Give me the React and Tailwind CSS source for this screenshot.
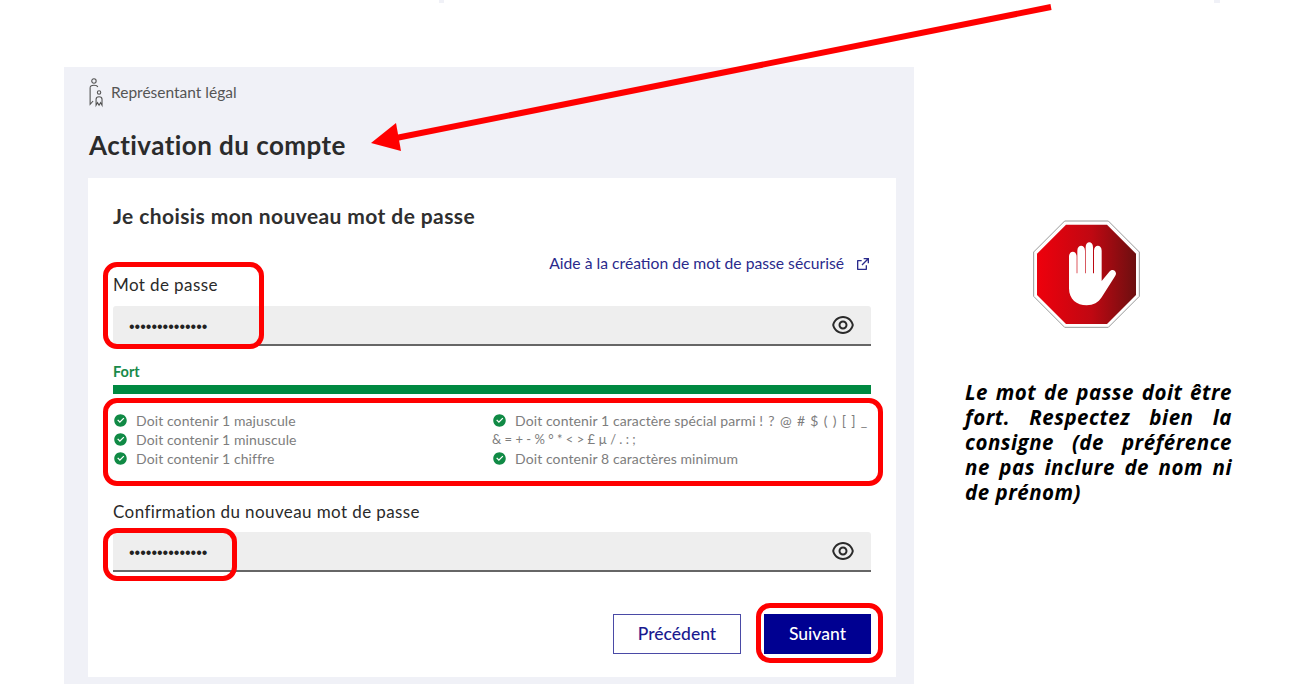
import React from "react";
import { RiCheckboxCircleFill, RiEyeLine, RiExternalLinkLine } from "react-icons/ri";

const Check = ({ className = "" }) => (
  <RiCheckboxCircleFill className={"inline-block w-[15px] h-[15px] text-[#108a45] shrink-0 " + className} />
);

const Rule = ({ children }) => (
  <div className="flex items-center h-[19px]">
    <Check />
    <span className="ml-[8px]">{children}</span>
  </div>
);

const PasswordField = () => (
  <div className="flex items-center justify-between h-[40px] bg-[#eeeeee] border-b-2 border-[#666666] rounded-t-[3px] pl-[16px] pr-[16px]">
    <span className="pt-[3px] text-[16px] text-[#222222] font-['Liberation_Sans',sans-serif]">••••••••••••••</span>
    <RiEyeLine className="w-[24px] h-[24px] text-[#2a2a2a]" />
  </div>
);

const Mark = ({ className }) => (
  <div className={"absolute border-[5px] border-[#ff0000] rounded-[14px] pointer-events-none " + className} />
);

export default function App() {
  return (
    <div className="relative w-[1291px] h-[695px] overflow-hidden bg-white font-['Lato',sans-serif] flex pt-[67px] pl-[64px]">
      <div className="absolute left-[439px] top-0 w-[5px] h-[3px] bg-[#f0f1f7]" />
      <div className="absolute left-[1214px] top-0 w-[6px] h-[3px] bg-[#f0f1f7]" />

      <main className="w-[850px] h-[617px] bg-[#f0f1f7] pl-[24px] pr-[18px] flex flex-col shrink-0">
        <div className="flex items-center h-[37px] mt-[7px]">
          <svg viewBox="0 0 20 34" className="w-[17px] h-[33px] text-[#555555]" fill="none" stroke="currentColor" strokeWidth="1.3">
            <circle cx="7" cy="3.5" r="2.6" />
            <path d="M2.5 11.5 C2.5 9 5 8.5 7 8.5 C9 8.5 11 9 11.5 10.5" />
            <path d="M2.5 11.5 V31 L6 27" />
            <circle cx="13" cy="17" r="2" />
            <path d="M9.5 32 V25 C9.5 22.5 11.5 22 13 22 C14.5 22 16.5 22.5 16.5 25 V32 L14.8 29 L13 32 L11.2 29 Z" />
          </svg>
          <span className="ml-[6px] text-[15.5px] text-[#555555]">Représentant légal</span>
        </div>
        <h1 className="mt-[14px] h-[40px] leading-[40px] text-[26px] font-bold tracking-[0.45px] text-[#2b2b2b] pl-[1px]">Activation du compte</h1>
        <section className="mt-[13px] w-[808px] h-[499px] bg-white px-[25px] flex flex-col">
          <h2 className="mt-[24px] h-[28px] leading-[28px] text-[21px] font-bold tracking-[0.4px] text-[#2f2f2f]">Je choisis mon nouveau mot de passe</h2>
          <div className="mt-[26px] flex justify-end items-center h-[16px] text-[15.7px] text-[#2a2a8c]">
            <span>Aide à la création de mot de passe sécurisé</span>
            <RiExternalLinkLine className="ml-[11px] w-[16px] h-[16px]" />
          </div>
          <label className="mt-[1px] h-[24px] leading-[24px] text-[17px] tracking-[0.4px] text-[#2a2a2a]">Mot de passe</label>
          <div className="mt-[9px]"><PasswordField /></div>
          <div className="mt-[17px] h-[18px] leading-[18px] text-[14.5px] font-bold text-[#188a4a]">Fort</div>
          <div className="mt-[4px] h-[9px] bg-[#008941]" />
          <div className="mt-[17px] h-[57px] grid grid-cols-[379px_379px] text-[14px] tracking-[0.1px] leading-[19px] text-[#7d7d7d]">
            <div>
              <Rule>Doit contenir 1 majuscule</Rule>
              <Rule>Doit contenir 1 minuscule</Rule>
              <Rule>Doit contenir 1 chiffre</Rule>
            </div>
            <div className="whitespace-nowrap">
              <div className="flex items-center h-[19px]">
                <Check />
                <span className="ml-[8px]">Doit contenir 1 caractère spécial parmi <span className="tracking-[0.85px]">! ? @ # $ ( ) { } [ ] _</span></span>
              </div>
              <div className="h-[19px] text-[13px] tracking-normal">&amp; = + - % ° * &lt; &gt; £ µ / . : ;</div>
              <Rule>Doit contenir 8 caractères minimum</Rule>
            </div>
          </div>
          <label className="mt-[32px] h-[24px] leading-[24px] text-[17px] tracking-[0.4px] text-[#2a2a2a]">Confirmation du nouveau mot de passe</label>
          <div className="mt-[8px]"><PasswordField /></div>
          <div className="mt-[42px] flex justify-end gap-[23px]">
            <button className="w-[128px] h-[40px] border border-[#4a4aa6] text-[#1a1a8f] text-[17.5px] font-medium bg-white">Précédent</button>
            <button className="w-[107px] h-[40px] bg-[#000091] text-white text-[17.5px] font-medium">Suivant</button>
          </div>
        </section>
      </main>

      <aside className="ml-[51px] w-[267px] shrink-0 flex flex-col">
        <svg viewBox="0 0 390 390" className="ml-[55px] mt-[143px] w-[130px] h-[130px] shrink-0">
          <defs>
            <linearGradient id="stop" x1="0" x2="1" y1="0" y2="0">
              <stop offset="0" stopColor="#ee000c" />
              <stop offset="0.55" stopColor="#c00812" />
              <stop offset="1" stopColor="#6c0f10" />
            </linearGradient>
          </defs>
          <polygon points="134,33 265,33 358,126 358,259 265,352 134,352 41,259 41,126" fill="#ffffff" stroke="#9a9a9a" strokeWidth="3" />
          <polygon points="138,44 261,44 348,131 348,255 261,342 138,342 51,255 51,131" fill="url(#stop)" />
          <path fill="#ffffff" d="M147 140 C147 120 170 120 170 140 L170 190 L172 190 L172 122 C172 102 195 102 195 122 L195 190 L197 190 L197 112 C197 92 219 92 219 112 L219 190 L222 190 L222 122 C222 102 245 102 245 122 L245 213 L268 185 C278 172 295 186 285 199 L245 262 C235 278 220 286 200 286 C170 286 147 268 147 235 Z" />
        </svg>
        <p className="mt-[40px] text-[20.5px] tracking-[0.5px] leading-[25px] font-bold italic text-black text-justify font-['Open_Sans',sans-serif]">
          Le mot de passe doit être fort. Respectez bien la consigne (de préférence ne pas inclure de nom ni de prénom)
        </p>
      </aside>

      <Mark className="left-[103px] top-[262px] w-[161px] h-[87px]" />
      <Mark className="left-[103px] top-[398px] w-[780px] h-[88px]" />
      <Mark className="left-[103px] top-[528px] w-[134px] h-[53px]" />
      <Mark className="left-[756px] top-[603px] w-[127px] h-[60px]" />

      <svg viewBox="0 0 1291 695" className="absolute left-0 top-0 w-[1291px] h-[695px] pointer-events-none">
        <line x1="1051" y1="7" x2="396" y2="138" stroke="#ff0000" strokeWidth="6" />
        <polygon points="371,143 396,123 401,151" fill="#ff0000" />
      </svg>
    </div>
  );
}
